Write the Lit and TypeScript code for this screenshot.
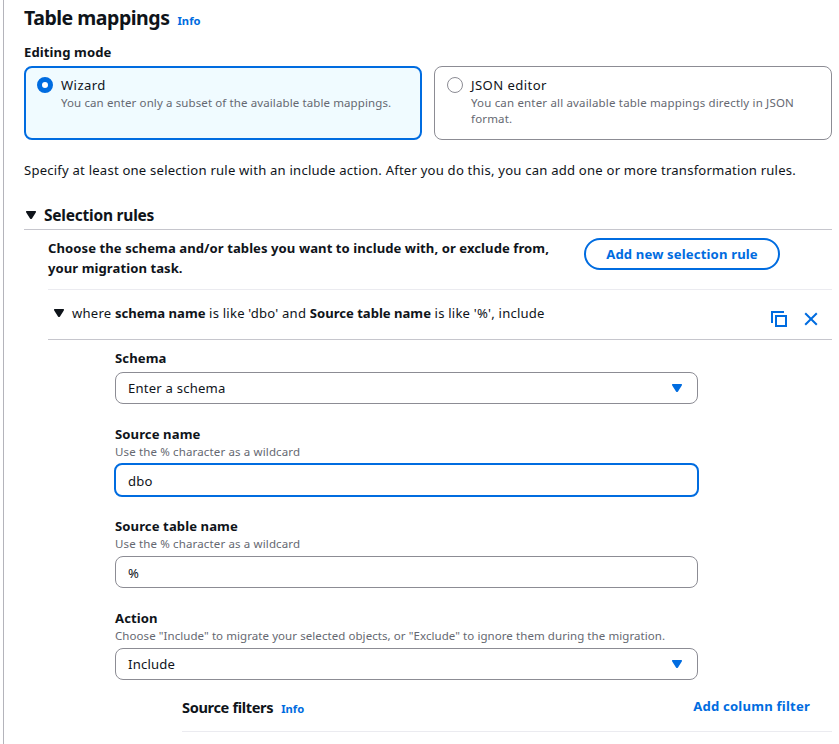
import { LitElement, html, css, svg, nothing } from "lit";
import { customElement, property } from "lit/decorators.js";

const base = css`
  :host { display: block; box-sizing: border-box; }
  * { box-sizing: border-box; }
`;

@customElement("mode-tile")
class ModeTile extends LitElement {
  @property() label = "";
  @property() description = "";
  @property({ type: Boolean, reflect: true }) selected = false;

  static styles = [base, css`
    :host { height: 74px; border: 1px solid #8c8c94; border-radius: 8px; padding: 8px 12px; background: #fff; }
    :host([selected]) { border: 2px solid #006ce0; padding: 7px 11px; background: #f0fbff; }
    .row { display: flex; gap: 8px; }
    .dot { flex: none; width: 16px; height: 16px; margin-top: 2px; border-radius: 50%; border: 1px solid #8c8c94; background: #fff; }
    :host([selected]) .dot { border: 5px solid #006ce0; }
    .label { line-height: 20px; letter-spacing: 0.42px; }
    .desc { font-size: 11.5px; line-height: 16px; color: #656871; letter-spacing: 0.17px; }
    :host([selected]) .desc { letter-spacing: 0.11px; }
  `];

  render() {
    return html`<div class="row"><span class="dot"></span><div>
      <div class="label">${this.label}</div>
      <div class="desc">${this.description}</div>
    </div></div>`;
  }
}

@customElement("caret-icon")
class CaretIcon extends LitElement {
  static styles = [base, css`
    :host { width: 16px; height: 16px; flex: none; }
    svg { display: block; }
  `];
  render() {
    return html`<svg width="16" height="16" viewBox="0 0 16 16">${svg`<path d="M3.4 4h9.2q.8.7.2 1.6L9 11.5q-1 1-2 0L3.2 5.600Q2.600 4.700 3.400 4Z" fill="currentColor"/>`}</svg>`;
  }
}

@customElement("form-row")
class FormRow extends LitElement {
  @property() label = "";
  @property() hint = "";
  @property() value = "";
  @property({ type: Boolean }) select = false;
  @property({ type: Boolean, reflect: true }) active = false;

  static styles = [base, css`
    .label { font-size: 13.1px; font-weight: 700; line-height: 20px; letter-spacing: 0.09px; }
    .hint { font-size: 11.5px; line-height: 16px; color: #656871; letter-spacing: 0.14px; }
    .hint.long { letter-spacing: 0.07px; }
    .box { display: flex; align-items: center; justify-content: space-between; height: 32px; margin-top: 4px; padding: 0 12px; border: 1px solid #8c8c94; border-radius: 8px; }
    .typed { padding-top: 2px; }
    :host([active]) .box { height: 34px; margin: 3px -1px -1px; border: 2px solid #006ce0; }
    caret-icon { color: #006ce0; }
  `];

  render() {
    return html`
      <div class="label">${this.label}</div>
      ${this.hint ? html`<div class="hint ${this.hint.length > 60 ? "long" : ""}">${this.hint}</div>` : nothing}
      <div class="box ${this.select ? "" : "typed"}"><span>${this.value}</span>${this.select ? html`<caret-icon></caret-icon>` : nothing}</div>
    `;
  }
}

@customElement("app-root")
class AppRoot extends LitElement {
  static styles = [base, css`
    :host {
      height: 744px; overflow: hidden; background: #fff; color: #0f141a;
      font: 13.1px/20px "Noto Sans", sans-serif; letter-spacing: 0.21px; padding-left: 3px;
    }
    .panel { height: 744px; border-left: 1px solid #b4b4bb; padding: 6px 7px 0 20px; }
    h2, h3, h4, p { margin: 0; }
    b, .bold { font-weight: 700; letter-spacing: 0.09px; }
    .heading { display: flex; align-items: baseline; gap: 8px; height: 24px; margin-bottom: 12px; }
    h2 { font-size: 19.5px; line-height: 24px; letter-spacing: -0.48px; }
    .info { font-size: 11.2px; font-weight: 700; color: #006ce0; letter-spacing: 0.03px; }
    .tiles { display: grid; grid-template-columns: 398px 398px; gap: 12px; margin-top: 4px; }
    .note { margin-top: 20px; }
    .section { display: flex; align-items: center; gap: 5px; height: 30px; margin-top: 20px; border-bottom: 1px solid #c6c6cd; }
    .section caret-icon { margin-left: -1px; }
    .section h3 { font-size: 15.5px; line-height: 20px; letter-spacing: -0.22px; }
    .rules { margin-left: 24px; }
    .intro { display: flex; height: 60px; padding-top: 8px; border-bottom: 1px solid #ebebf0; justify-content: space-between; }
    .intro p { width: 512px; letter-spacing: 0.06px; }
    .add { height: 32px; width: 196px; margin-right: 52px; border: 2px solid #006ce0; border-radius: 16px; color: #006ce0; letter-spacing: 0.15px; font-weight: 700; display: flex; align-items: center; justify-content: center; }
    .rule { display: flex; height: 50px; padding: 13px 13px 0 3px; border-bottom: 1px solid #c6c6cd; }
    .rule caret-icon { margin: 2px 5px 0 0; }
    .rule b { letter-spacing: -0.01px; }
    .text { flex: 1; }
    .tools { display: flex; gap: 16px; color: #006ce0; padding-top: 8px; }
    .tools svg { display: block; }
    .form { display: grid; gap: 20px; width: 583px; margin: 8px 0 0 67px; }
    .filters { display: flex; justify-content: space-between; height: 52px; margin-left: 134px; padding: 16px 22px 0 0; border-bottom: 1px solid #ebebf0; }
    .ftitle { display: flex; align-items: baseline; gap: 8px; padding-top: 1px; }
    h4 { font-size: 14.6px; line-height: 20px; letter-spacing: -0.36px; }
    .link { color: #006ce0; font-weight: 700; }
  `];

  render() {
    return html`<div class="panel">
      <div class="heading"><h2>Table mappings</h2><span class="info">Info</span></div>
      <div class="bold">Editing mode</div>
      <div class="tiles">
        <mode-tile selected label="Wizard" description="You can enter only a subset of the available table mappings."></mode-tile>
        <mode-tile label="JSON editor" description="You can enter all available table mappings directly in JSON format."></mode-tile>
      </div>
      <p class="note">Specify at least one selection rule with an include action. After you do this, you can add one or more transformation rules.</p>
      <div class="section"><caret-icon></caret-icon><h3>Selection rules</h3></div>
      <div class="rules">
        <div class="intro">
          <p class="bold">Choose the schema and/or tables you want to include with, or exclude from, your migration task.</p>
          <div class="add">Add new selection rule</div>
        </div>
        <div class="rule">
          <caret-icon></caret-icon>
          <div class="text">where <b>schema name</b> is like 'dbo' and <b>Source table name</b> is like '%', include</div>
          <div class="tools">
            <svg width="16" height="16" viewBox="0 0 16 16" fill="none" stroke="currentColor" stroke-width="2"><path d="M1 12V1h12"/><path d="M5 5h10v10H5z"/></svg>
            <svg width="16" height="16" viewBox="0 0 16 16" fill="none" stroke="currentColor" stroke-width="2"><path d="m2.200 2.200 11.600 11.600M13.800 2.200 2.200 13.800"/></svg>
          </div>
        </div>
        <div class="form">
          <form-row label="Schema" value="Enter a schema" select></form-row>
          <form-row label="Source name" hint="Use the % character as a wildcard" value="dbo" active></form-row>
          <form-row label="Source table name" hint="Use the % character as a wildcard" value="%"></form-row>
          <form-row label="Action" hint='Choose "Include" to migrate your selected objects, or "Exclude" to ignore them during the migration.' value="Include" select></form-row>
        </div>
        <div class="filters">
          <div class="ftitle"><h4>Source filters</h4><span class="info">Info</span></div>
          <span class="link">Add column filter</span>
        </div>
      </div>
    </div>`;
  }
}
